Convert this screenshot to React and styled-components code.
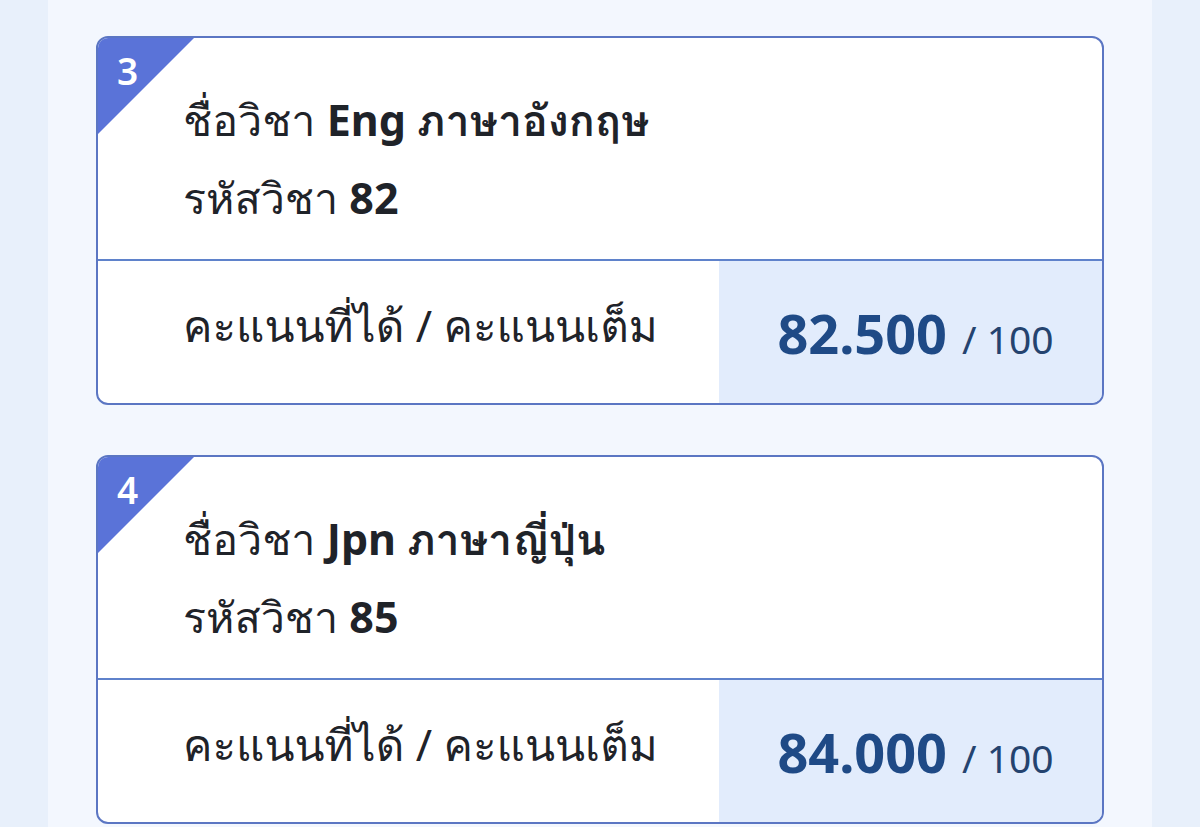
import React from 'react';
import styled, { createGlobalStyle } from 'styled-components';

const GlobalStyle = createGlobalStyle`
  html, body {
    margin: 0;
    padding: 0;
    background: #e8f0fb;
    font-family: "Noto Sans", Loma, "Noto Sans Thai Looped", sans-serif;
    color: #1f2329;
  }
`;

const Page = styled.div`
  margin: 0 48px;
  min-height: 827px;
  background: #f3f7fe;
  padding: 36px 48px 0;
  display: flex;
  flex-direction: column;
  gap: 50px;
`;

const Card = styled.div`
  position: relative;
  background: #ffffff;
  border: 2px solid #5b76c3;
  border-radius: 12px;
  overflow: hidden;
`;

// blue triangle in the top-left corner holding the row number
const Corner = styled.div`
  position: absolute;
  top: 0;
  left: 0;
  width: 96px;
  height: 96px;
  background: #5a73d8;
  clip-path: polygon(0 0, 100% 0, 0 100%);
`;

const CornerNumber = styled.span`
  position: absolute;
  top: 14px;
  left: 19px;
  color: #ffffff;
  font-size: 37px;
  font-weight: 600;
  line-height: 1;
`;

const Info = styled.div`
  padding: 43px 40px 22px 85px;
  display: flex;
  flex-direction: column;
`;

const InfoLine = styled.div`
  font-size: 43px;
  line-height: 78px;
  font-weight: 500;
  color: #1f2329;

  b {
    font-weight: 700;
  }
`;

const ScoreRow = styled.div`
  display: grid;
  grid-template-columns: 621px 1fr;
  border-top: 2px solid #5f82cb;
  height: 142px;
`;

const ScoreLabel = styled.div`
  display: flex;
  align-items: center;
  padding: 0 0 12px 85px;
  font-size: 44px;
  color: #1f2329;
`;

const ScoreValue = styled.div`
  display: flex;
  align-items: baseline;
  justify-content: center;
  padding: 45px 0 0 10px;
  background: #e2ecfc;
  color: #1f4a86;
  gap: 15px;
`;

const Got = styled.span`
  font-size: 54px;
  font-weight: 700;
  line-height: 1;
`;

const Full = styled.span`
  font-size: 39px;
  font-weight: 400;
  line-height: 1;
  color: #24436f;
`;

const subjects = [
  { no: 3, name: 'Eng ภาษาอังกฤษ', code: '82', score: '82.500', full: 100 },
  { no: 4, name: 'Jpn ภาษาญี่ปุ่น', code: '85', score: '84.000', full: 100 },
];

const SubjectCard = ({ subject }) => (
  <Card>
    <Corner>
      <CornerNumber>{subject.no}</CornerNumber>
    </Corner>
    <Info>
      <InfoLine>
        ชื่อวิชา <b>{subject.name}</b>
      </InfoLine>
      <InfoLine>
        รหัสวิชา <b>{subject.code}</b>
      </InfoLine>
    </Info>
    <ScoreRow>
      <ScoreLabel>คะแนนที่ได้ / คะแนนเต็ม</ScoreLabel>
      <ScoreValue>
        <Got>{subject.score}</Got>
        <Full>/ {subject.full}</Full>
      </ScoreValue>
    </ScoreRow>
  </Card>
);

export default function App() {
  return (
    <>
      <GlobalStyle />
      <Page>
        {subjects.map((s) => (
          <SubjectCard key={s.no} subject={s} />
        ))}
      </Page>
    </>
  );
}
